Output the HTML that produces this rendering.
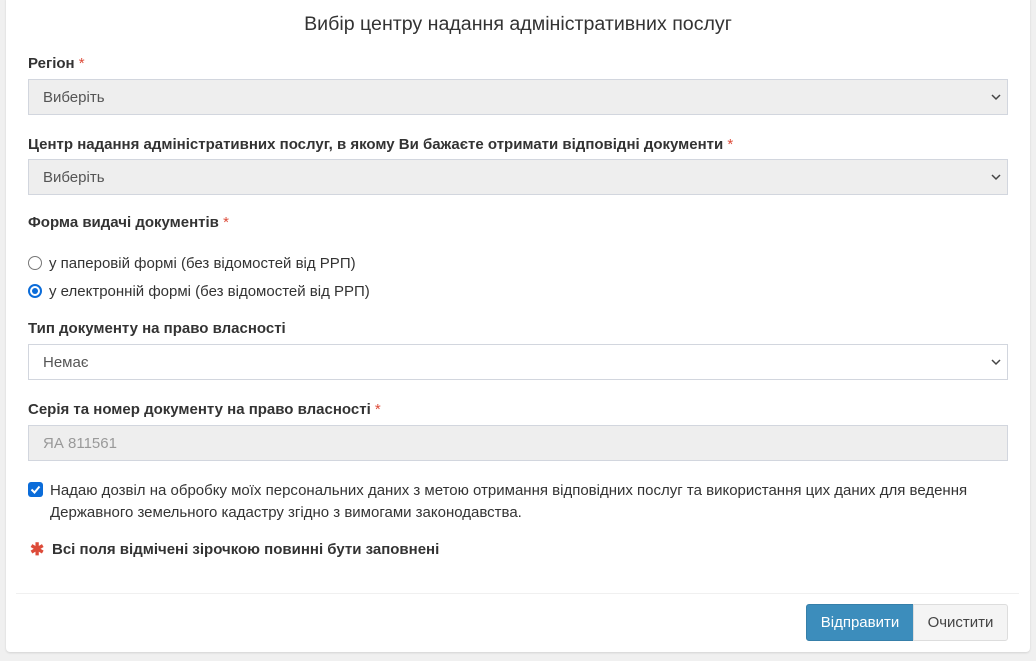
<!DOCTYPE html>
<html><head><meta charset="utf-8"><style>
*{box-sizing:border-box;margin:0;padding:0}
body{width:1036px;height:661px;background:#f0f0f0;font-family:"Liberation Sans",sans-serif;color:#333;font-size:15px;position:relative;overflow:hidden}
.card{position:absolute;left:6px;top:-4px;width:1024px;height:656px;background:#fff;border-radius:4px;box-shadow:0 1px 2px rgba(0,0,0,.12)}
.a{position:absolute}
h1{position:absolute;top:13px;left:0;width:1036px;text-align:center;font-weight:normal;font-size:19.6px;color:#333}
.lbl{position:absolute;left:28px;font-weight:bold;font-size:15px;color:#333}
.lbl i{font-style:normal;color:#dd4b39;font-weight:normal}
.sel{position:absolute;left:28px;width:980px;height:36px;border:1px solid #d2d6de;background:#eee;padding:9px 14px;font-size:15px;color:#555}
.sel.w{background:#fff}
.sel svg{position:absolute;right:6px;top:13px}
.rad{position:absolute;left:28px;font-size:15px;color:#333}
.rad span{display:inline-block;width:14px;height:14px;border-radius:50%;border:1px solid #777;vertical-align:-2px;margin-right:7px;position:relative}
.rad span.on{border:2px solid #0b6cd9}
.rad span.on:after{content:"";position:absolute;left:2px;top:2px;width:6px;height:6px;border-radius:50%;background:#0b6cd9}
</style></head><body>
<div class="card"></div>
<h1>Вибір центру надання адміністративних послуг</h1>
<div class="lbl" style="top:55px">Регіон <i>*</i></div>
<div class="sel" style="top:79px">Виберіть<svg width="10" height="8" viewBox="0 0 10 8"><path d="M1 2l4 4 4-4" fill="none" stroke="#444" stroke-width="1.5"/></svg></div>
<div class="lbl" style="top:136px">Центр надання адміністративних послуг, в якому Ви бажаєте отримати відповідні документи <i>*</i></div>
<div class="sel" style="top:159px">Виберіть<svg width="10" height="8" viewBox="0 0 10 8"><path d="M1 2l4 4 4-4" fill="none" stroke="#444" stroke-width="1.5"/></svg></div>
<div class="lbl" style="top:214px">Форма видачі документів <i>*</i></div>
<div class="rad" style="top:255px"><span></span>у паперовій формі (без відомостей від РРП)</div>
<div class="rad" style="top:283px"><span class="on"></span>у електронній формі (без відомостей від РРП)</div>
<div class="lbl" style="top:320px">Тип документу на право власності</div>
<div class="sel w" style="top:344px">Немає<svg width="10" height="8" viewBox="0 0 10 8"><path d="M1 2l4 4 4-4" fill="none" stroke="#444" stroke-width="1.5"/></svg></div>
<div class="lbl" style="top:401px">Серія та номер документу на право власності <i>*</i></div>
<div class="sel" style="top:425px;color:#999">ЯА 811561</div>
<div class="a" style="left:28px;top:482px;width:15px;height:15px;background:#0b6cd9;border-radius:3px"><svg width="15" height="15" viewBox="0 0 15 15"><path d="M3.5 7.5l3 3 5-6" fill="none" stroke="#fff" stroke-width="2"/></svg></div>
<div class="a" style="left:50px;top:480px;width:960px;line-height:22px;font-size:15px;color:#333">Надаю дозвіл на обробку моїх персональних даних з метою отримання відповідних послуг та використання цих даних для ведення Державного земельного кадастру згідно з вимогами законодавства.</div>
<div class="a" style="left:30px;top:540px;color:#dd4b39;font-size:17px;font-weight:bold">✱</div>
<div class="a" style="left:52px;top:541px;font-weight:bold;font-size:15px">Всі поля відмічені зірочкою повинні бути заповнені</div>
<div class="a" style="left:16px;top:593px;width:1003px;height:1px;background:#f0f0f0"></div>
<div class="a" style="left:806px;top:604px;width:108px;height:37px;background:#3c8dbc;border:1px solid #367fa9;border-radius:3px 0 0 3px;color:#fff;font-size:15px;text-align:center;line-height:36px">Відправити</div>
<div class="a" style="left:913px;top:604px;width:95px;height:37px;background:#f4f4f4;border:1px solid #ddd;border-radius:0 3px 3px 0;color:#444;font-size:15px;text-align:center;line-height:36px">Очистити</div>
</body></html>
